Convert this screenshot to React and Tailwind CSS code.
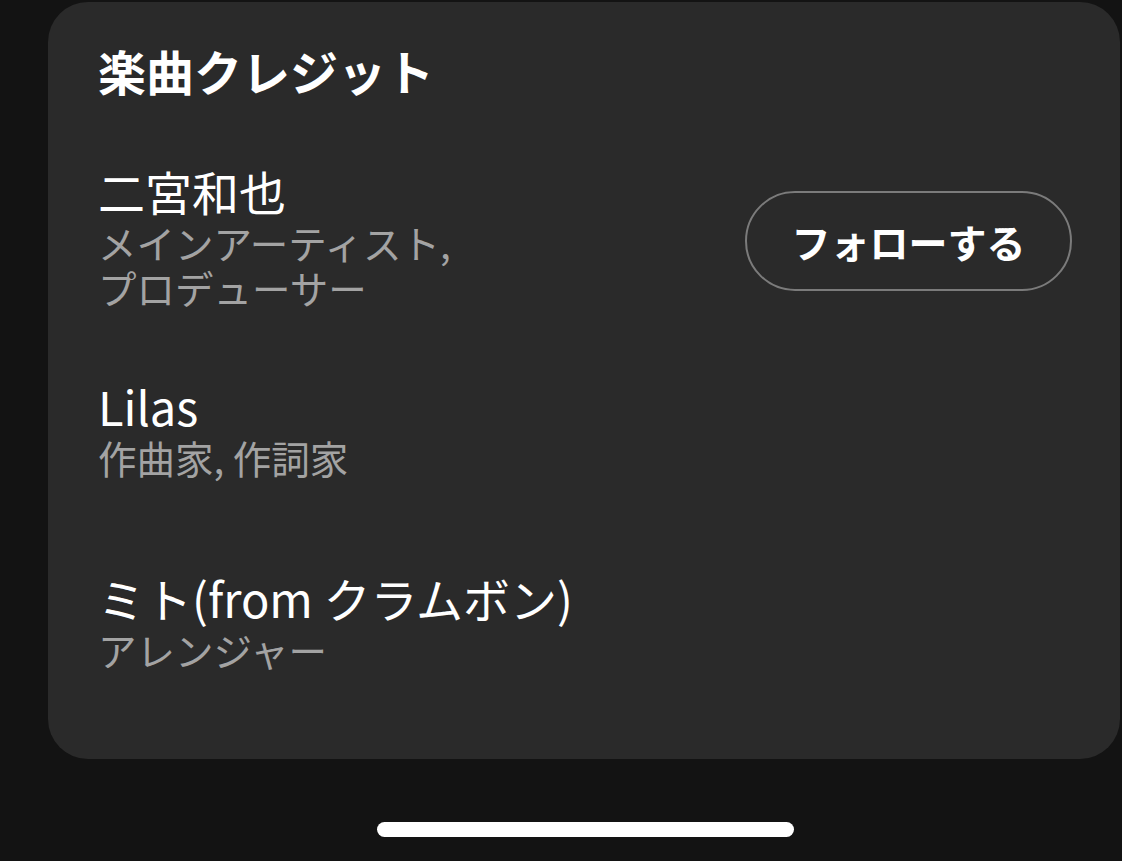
const credits = [
  { name: '二宮和也', roles: ['メインアーティスト,', 'プロデューサー'], follow: true },
  { name: 'Lilas', roles: ['作曲家, 作詞家'] },
  { name: 'ミト(from クラムボン)', roles: ['アレンジャー'] },
];

function CreditRow({ name, roles, follow }) {
  return (
    <div className="h-[192px] flex items-center justify-between">
      <div className="flex flex-col">
        <div className="text-[47px] leading-[58px] text-white">{name}</div>
        {roles.map((r) => (
          <div key={r} className="text-[38.5px] leading-[45px] text-[#a3a3a3]">{r}</div>
        ))}
      </div>
      {follow && (
        <button className="mt-[10px] w-[327px] h-[100px] rounded-full border-2 border-[#7b7b7b] text-white font-bold text-[39px] flex items-center justify-center">
          フォローする
        </button>
      )}
    </div>
  );
}

export default function App() {
  return (
    <div
      className="w-[1122px] h-[861px] bg-[#131313] overflow-hidden flex flex-col"
      style={{ fontFamily: '"Noto Sans CJK JP", "Noto Sans", sans-serif' }}
    >
      <div className="h-[757px] mt-[2px] ml-[48px] mr-[2px] rounded-[40px] bg-[#2a2a2a] pl-[50px] pr-[48px] pt-[36px] flex flex-col">
        <h1 className="text-[48px] leading-[64px] font-bold text-white">楽曲クレジット</h1>
        <div className="mt-[38px] flex flex-col">
          {credits.map((c) => (
            <CreditRow key={c.name} {...c} />
          ))}
        </div>
      </div>
      <div className="mt-[63px] ml-[377px] w-[417px] h-[15px] rounded-full bg-white" />
    </div>
  );
}
